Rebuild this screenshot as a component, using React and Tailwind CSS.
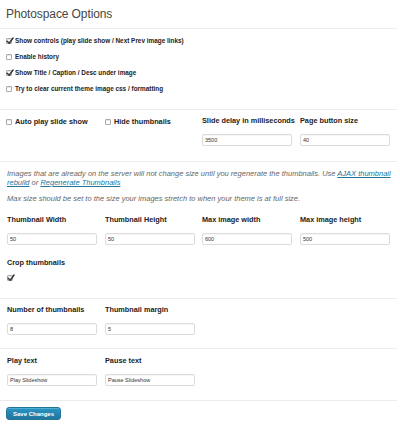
import React from "react";

function Check({ checked }) {
  return (
    <span className="relative inline-flex w-[6px] h-[6px] shrink-0 border border-[#a9a9a9] rounded-[1px] bg-white shadow-[inset_0_1px_1px_rgba(0,0,0,0.1)]">
      {checked && (
        <svg viewBox="0 0 10 10" className="absolute left-[-1px] top-[-2px] w-[8px] h-[8px]">
          <path d="M1.5 5.2 L4 7.8 L8.8 1.2" fill="none" stroke="#333" strokeWidth="1.8" strokeLinecap="round" strokeLinejoin="round" />
        </svg>
      )}
    </span>
  );
}

function CheckRow({ checked, label }) {
  return (
    <div className="h-[16px] flex items-center gap-[3px]">
      <Check checked={checked} />
      <span className="text-[6.4px] font-bold text-[#222] leading-none whitespace-nowrap">{label}</span>
    </div>
  );
}

function Field({ label, value }) {
  return (
    <div className="flex flex-col">
      <div className="h-[10px] flex items-center font-bold text-[#222] leading-none whitespace-nowrap text-[7.3px]">{label}</div>
      <div className="mt-[8px] w-[90px] h-[12px] border border-[#dcdcdc] rounded-[2px] bg-white flex items-center pl-[2px] text-[5.5px] text-[#333] shadow-[inset_0_1px_1px_rgba(0,0,0,0.04)]">
        {value}
      </div>
    </div>
  );
}

function Hr() {
  return <div className="h-[1px] bg-[#ececec] w-[397px]" />;
}

export default function App() {
  return (
    <div className="w-[400px] h-[427px] bg-white overflow-hidden font-['Liberation_Sans',Arial,sans-serif]">
      <div className="h-[28px] pl-[6px] flex items-center">
        <span className="text-[12px] text-[#464646] leading-none tracking-[-0.1px]">Photospace Options</span>
      </div>
      <Hr />
      <div className="pl-[6px] pt-[4px] pb-[12px]">
        <CheckRow checked label="Show controls (play slide show / Next Prev image links)" />
        <CheckRow label="Enable history" />
        <CheckRow checked label="Show Title / Caption / Desc under image" />
        <CheckRow label="Try to clear current theme image css / formatting" />
      </div>
      <Hr />
      <div className="pl-[7px] pt-[6px] pb-[15px] grid grid-cols-[98px_97px_98px_97px]">
        <div className="h-[12px] flex items-center gap-[3px] -ml-[1px]">
          <Check />
          <span className="text-[7.3px] font-bold text-[#222] leading-none whitespace-nowrap">Auto play slide show</span>
        </div>
        <div className="h-[12px] flex items-center gap-[3px]">
          <Check />
          <span className="text-[7.3px] font-bold text-[#222] leading-none whitespace-nowrap">Hide thumbnails</span>
        </div>
        <Field label="Slide delay in milliseconds" value="3500" />
        <Field label="Page button size" value="40" />
      </div>
      <Hr />
      <div className="pl-[7px] pr-[2px] pt-[7px] text-[7.5px] italic text-[#666] leading-[9px]">
        <p>
          Images that are already on the server will not change size until you regenerate the thumbnails. Use{" "}
          <a className="text-[#21759b] underline">AJAX thumbnail rebuild</a> or{" "}
          <a className="text-[#21759b] underline">Regenerate Thumbnails</a>
        </p>
        <p className="mt-[7px]">Max size should be set to the size your images stretch to when your theme is at full size.</p>
      </div>
      <div className="pl-[7px] pt-[12px] grid grid-cols-[98px_97px_98px_97px]">
        <Field label="Thumbnail Width" value="50" />
        <Field label="Thumbnail Height" value="50" />
        <Field label="Max image width" value="600" />
        <Field label="Max image height" value="500" />
      </div>
      <div className="pl-[7px] pt-[13px] pb-[15px]">
        <div className="h-[10px] flex items-center text-[7.3px] font-bold text-[#222] leading-none">Crop thumbnails</div>
        <div className="h-[10px] mt-[5px] flex items-center">
          <Check checked />
        </div>
      </div>
      <Hr />
      <div className="pl-[7px] pt-[6px] pb-[13px] grid grid-cols-[98px_97px_98px_97px]">
        <Field label="Number of thumbnails" value="8" />
        <Field label="Thumbnail margin" value="5" />
      </div>
      <Hr />
      <div className="pl-[7px] pt-[7px] pb-[14px] grid grid-cols-[98px_97px_98px_97px]">
        <Field label="Play text" value="Play Slideshow" />
        <Field label="Pause text" value="Pause Slideshow" />
      </div>
      <Hr />
      <div className="pl-[6px] pt-[6px]">
        <button className="h-[13px] w-[55px] rounded-[3px] border border-[#21759b] bg-gradient-to-b from-[#2a95c5] to-[#21759b] text-white text-[6px] font-bold leading-none flex items-center justify-center shadow-[inset_0_1px_0_rgba(120,200,230,0.5)]">
          Save Changes
        </button>
      </div>
    </div>
  );
}
